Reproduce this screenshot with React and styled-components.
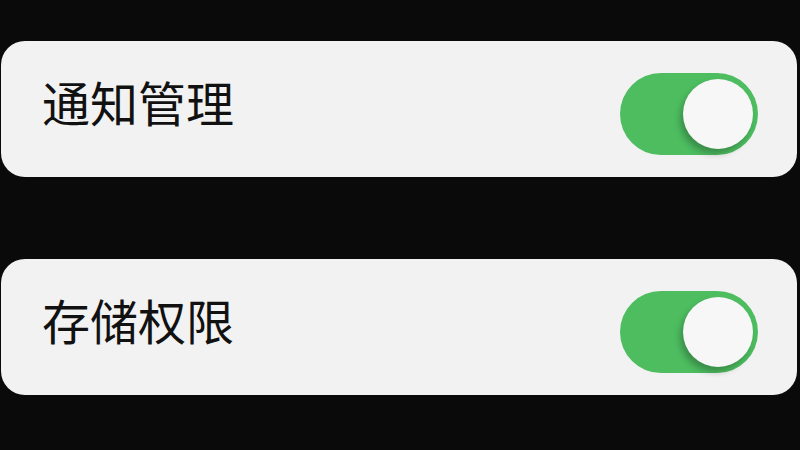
import React, { useState } from "react";
import styled, { createGlobalStyle } from "styled-components";

const GlobalStyle = createGlobalStyle`
  html, body {
    margin: 0;
    padding: 0;
    background: #0a0a0a;
  }
  body {
    font-family: "Noto Sans CJK SC", "Noto Sans", sans-serif;
  }
`;

const Page = styled.div`
  width: 800px;
  height: 450px;
  box-sizing: border-box;
  padding: 41px 3px 0 1px;
  display: flex;
  flex-direction: column;
  gap: 82px;
  overflow: hidden;
`;

const Card = styled.div`
  height: 136px;
  background: #f2f2f2;
  border-radius: 24px;
  display: flex;
  align-items: center;
  justify-content: space-between;
  padding: 0 39px 0 40px;
  box-sizing: border-box;
`;

const Label = styled.span`
  font-size: 48px;
  font-weight: 400;
  color: #111111;
  line-height: 1;
  margin: -4px 0 12px 1px;
`;

const Track = styled.button`
  width: 138px;
  height: 82px;
  border-radius: 41px;
  border: none;
  padding: 0 5px;
  margin-top: 10px;
  display: flex;
  align-items: center;
  justify-content: ${({ on }) => (on ? "flex-end" : "flex-start")};
  background: ${({ on }) => (on ? "#4dbd60" : "#d9d9d9")};
  cursor: pointer;
`;

const Knob = styled.span`
  width: 70px;
  height: 70px;
  border-radius: 50%;
  background: #f7f7f7;
  box-shadow: -3px 5px 6px rgba(0, 0, 0, 0.25);
`;

const Toggle = ({ defaultOn }) => {
  const [on, setOn] = useState(defaultOn);
  return (
    <Track on={on ? 1 : 0} onClick={() => setOn(!on)}>
      <Knob />
    </Track>
  );
};

const settings = [
  { id: "notify", label: "通知管理", on: true },
  { id: "storage", label: "存储权限", on: true },
];

const App = () => {
  return (
    <>
      <GlobalStyle />
      <Page>
        {settings.map((item) => (
          <Card key={item.id}>
            <Label>{item.label}</Label>
            <Toggle defaultOn={item.on} />
          </Card>
        ))}
      </Page>
    </>
  );
};

export default App;
